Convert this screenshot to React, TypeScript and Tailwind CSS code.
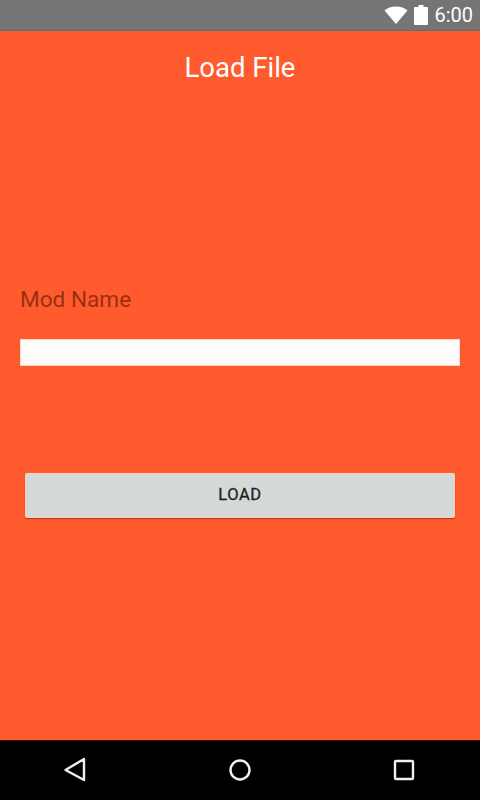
export default function App() {
  return (
    <div className="w-[480px] h-[800px] flex flex-col bg-[#ff5b2e] font-['Roboto',sans-serif] overflow-hidden">
      <div className="h-[31px] shrink-0 bg-[#757575] flex items-center justify-end pr-[7px] border-b border-[#6a6a6a]">
        <svg width="24" height="18" viewBox="0 0 24 18" className="mr-[6px]">
          <path d="M0.5 4.5C3.5 2 7.5 0.5 12 0.5s8.500 1.500 11.500 4L12 18z" fill="#fff" />
        </svg>
        <svg width="14" height="20" viewBox="0 0 14 20" className="mr-[6px]">
          <path d="M4.500 0h5v2H13a1 1 0 0 1 1 1v16a1 1 0 0 1-1 1H1a1 1 0 0 1-1-1V3a1 1 0 0 1 1-1h3.500z" fill="#fff" />
        </svg>
        <span className="text-white text-[20px] leading-none">6:00</span>
      </div>
      <main className="flex-1 flex flex-col">
        <h1 className="mt-[21px] text-center text-white text-[27.500px] leading-[32px] font-normal">Load File</h1>
        <label className="mt-[202px] ml-5 text-[#9c2f12] text-[22.600px] leading-[28px]">Mod Name</label>
        <div className="mt-[25px] mx-5 h-[27px] bg-[#fffdfb] border border-[#ffd6c8]" />
        <button className="mt-[107px] mx-[25px] h-[45px] bg-[#d5d9d7] border border-[#f8d0c2] rounded-[2px] shadow-[0_1px_1px_rgba(120,40,10,0.6)] text-[#1f1f1f] text-[16.500px] tracking-[0.6px] font-normal [-webkit-text-stroke:0.3px_#1f1f1f]">
          LOAD
        </button>
      </main>
      <nav className="h-[60px] shrink-0 bg-black border-t border-[#3a1208] flex items-center pl-[63px] pr-[65px] justify-between pb-[2px]">
        <svg width="24" height="26" viewBox="0 0 24 26" fill="none" stroke="#f0f0f0" strokeWidth="2.400" strokeLinejoin="round">
          <path d="M21 2v21L2.500 13z" />
        </svg>
        <svg width="24" height="24" viewBox="0 0 24 24" fill="none" stroke="#f0f0f0" strokeWidth="2.400">
          <circle cx="12" cy="12" r="9.500" />
        </svg>
        <svg width="22" height="22" viewBox="0 0 22 22" fill="none" stroke="#f0f0f0" strokeWidth="2.400" strokeLinejoin="round">
          <rect x="2" y="2" width="18" height="18" rx="1" />
        </svg>
      </nav>
    </div>
  );
}
